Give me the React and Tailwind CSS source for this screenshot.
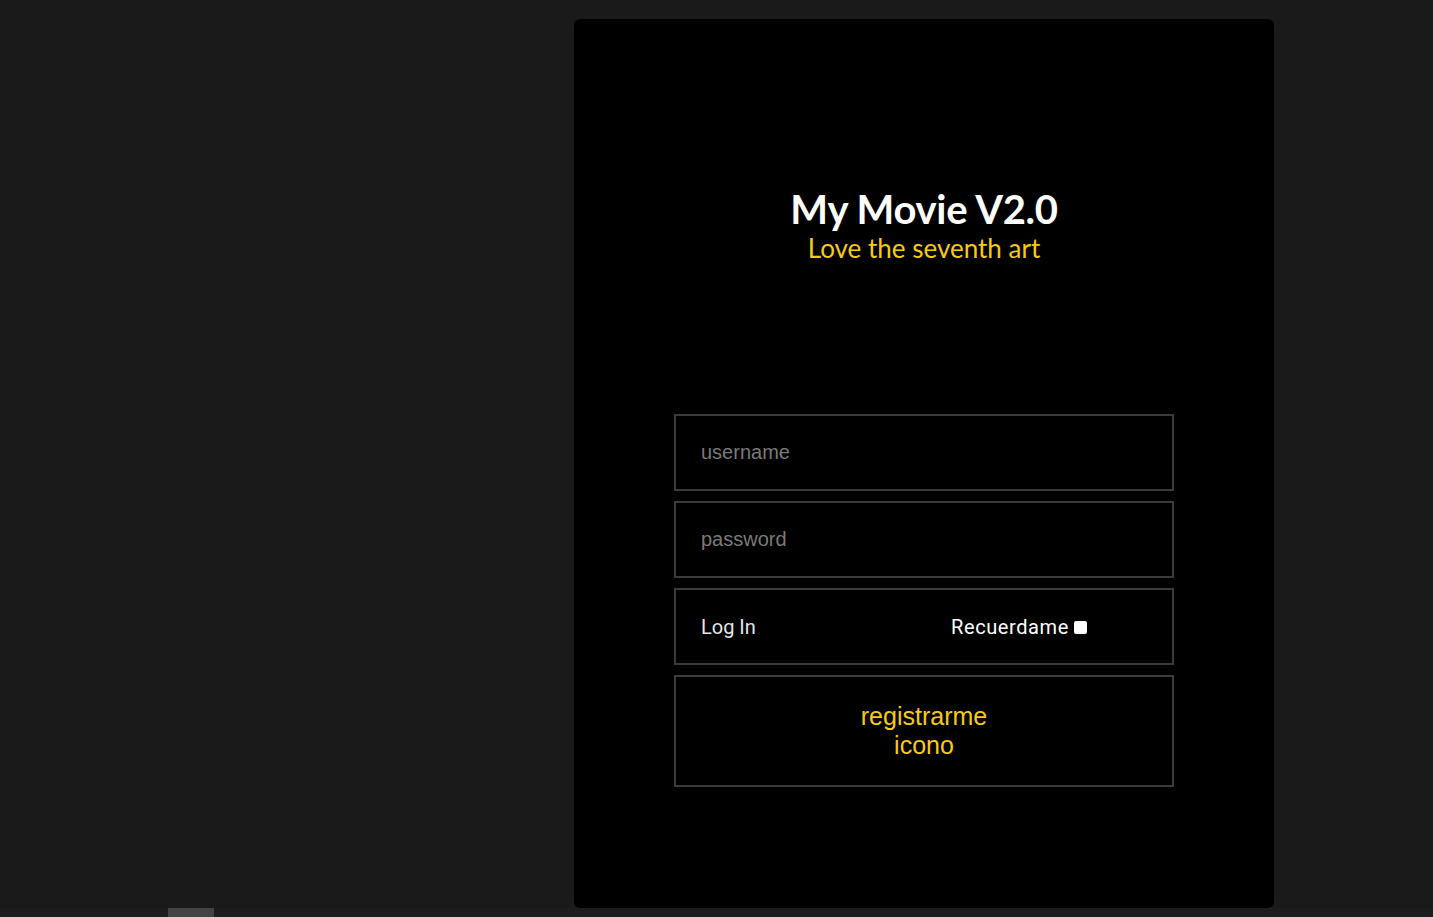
import { useState } from 'react';

export default function App() {
  const [remember, setRemember] = useState(false);

  return (
    <div className="min-h-[917px] bg-[#1a1a1a] flex flex-col">
      <div className="flex pt-[19px] pl-[574px]">
        <section className="w-[700px] h-[889px] bg-black rounded-[6px] flex flex-col items-center">
          <header className="mt-[167px] flex flex-col items-center">
            <h1 className="text-white font-bold text-[40px] leading-[46px] tracking-[-0.3px] font-['Lato','Noto_Sans',sans-serif]">
              My Movie V2.0
            </h1>
            <p className="text-[#f7cb15] text-[26px] leading-[32px] mt-[0px] font-['Lato','Noto_Sans',sans-serif]">
              Love the seventh art
            </p>
          </header>

          <form className="mt-[150px] w-[500px] flex flex-col gap-[10px] font-['Liberation_Sans',Arial,sans-serif]">
            <input
              type="text"
              placeholder="username"
              className="h-[77px] w-full bg-black border-2 border-[#3b3b3b] px-[25px] text-[20px] text-white placeholder:text-[#7a7a7a] outline-none"
            />
            <input
              type="password"
              placeholder="password"
              className="h-[77px] w-full bg-black border-2 border-[#3b3b3b] px-[25px] text-[20px] text-white placeholder:text-[#7a7a7a] outline-none"
            />
            <div className="h-[77px] w-full border-2 border-[#3b3b3b] flex items-center pl-[25px] text-[20px] text-[#e6e6e6] font-['Roboto','Liberation_Sans',sans-serif]">
              <button type="button" className="w-[250px] text-left">Log In</button>
              <label className="flex items-center gap-[5px] cursor-pointer">
                <span className="text-white tracking-[0.6px]">Recuerdame</span>
                <input
                  type="checkbox"
                  checked={remember}
                  onChange={(e) => setRemember(e.target.checked)}
                  className="appearance-none w-[13px] h-[13px] bg-white rounded-[2px] mt-[1px]"
                />
              </label>
            </div>
            <button
              type="button"
              className="h-[112px] w-full border-2 border-[#3b3b3b] flex flex-col items-center justify-center text-[#f7cb15] text-[25px] leading-[29px]"
            >
              <span>registrarme</span>
              <span>icono</span>
            </button>
          </form>
        </section>
      </div>
      <div className="mt-auto h-[9px] bg-[#1d1d1d] flex">
        <div className="ml-[168px] w-[46px] h-full bg-[#444]" />
      </div>
    </div>
  );
}
